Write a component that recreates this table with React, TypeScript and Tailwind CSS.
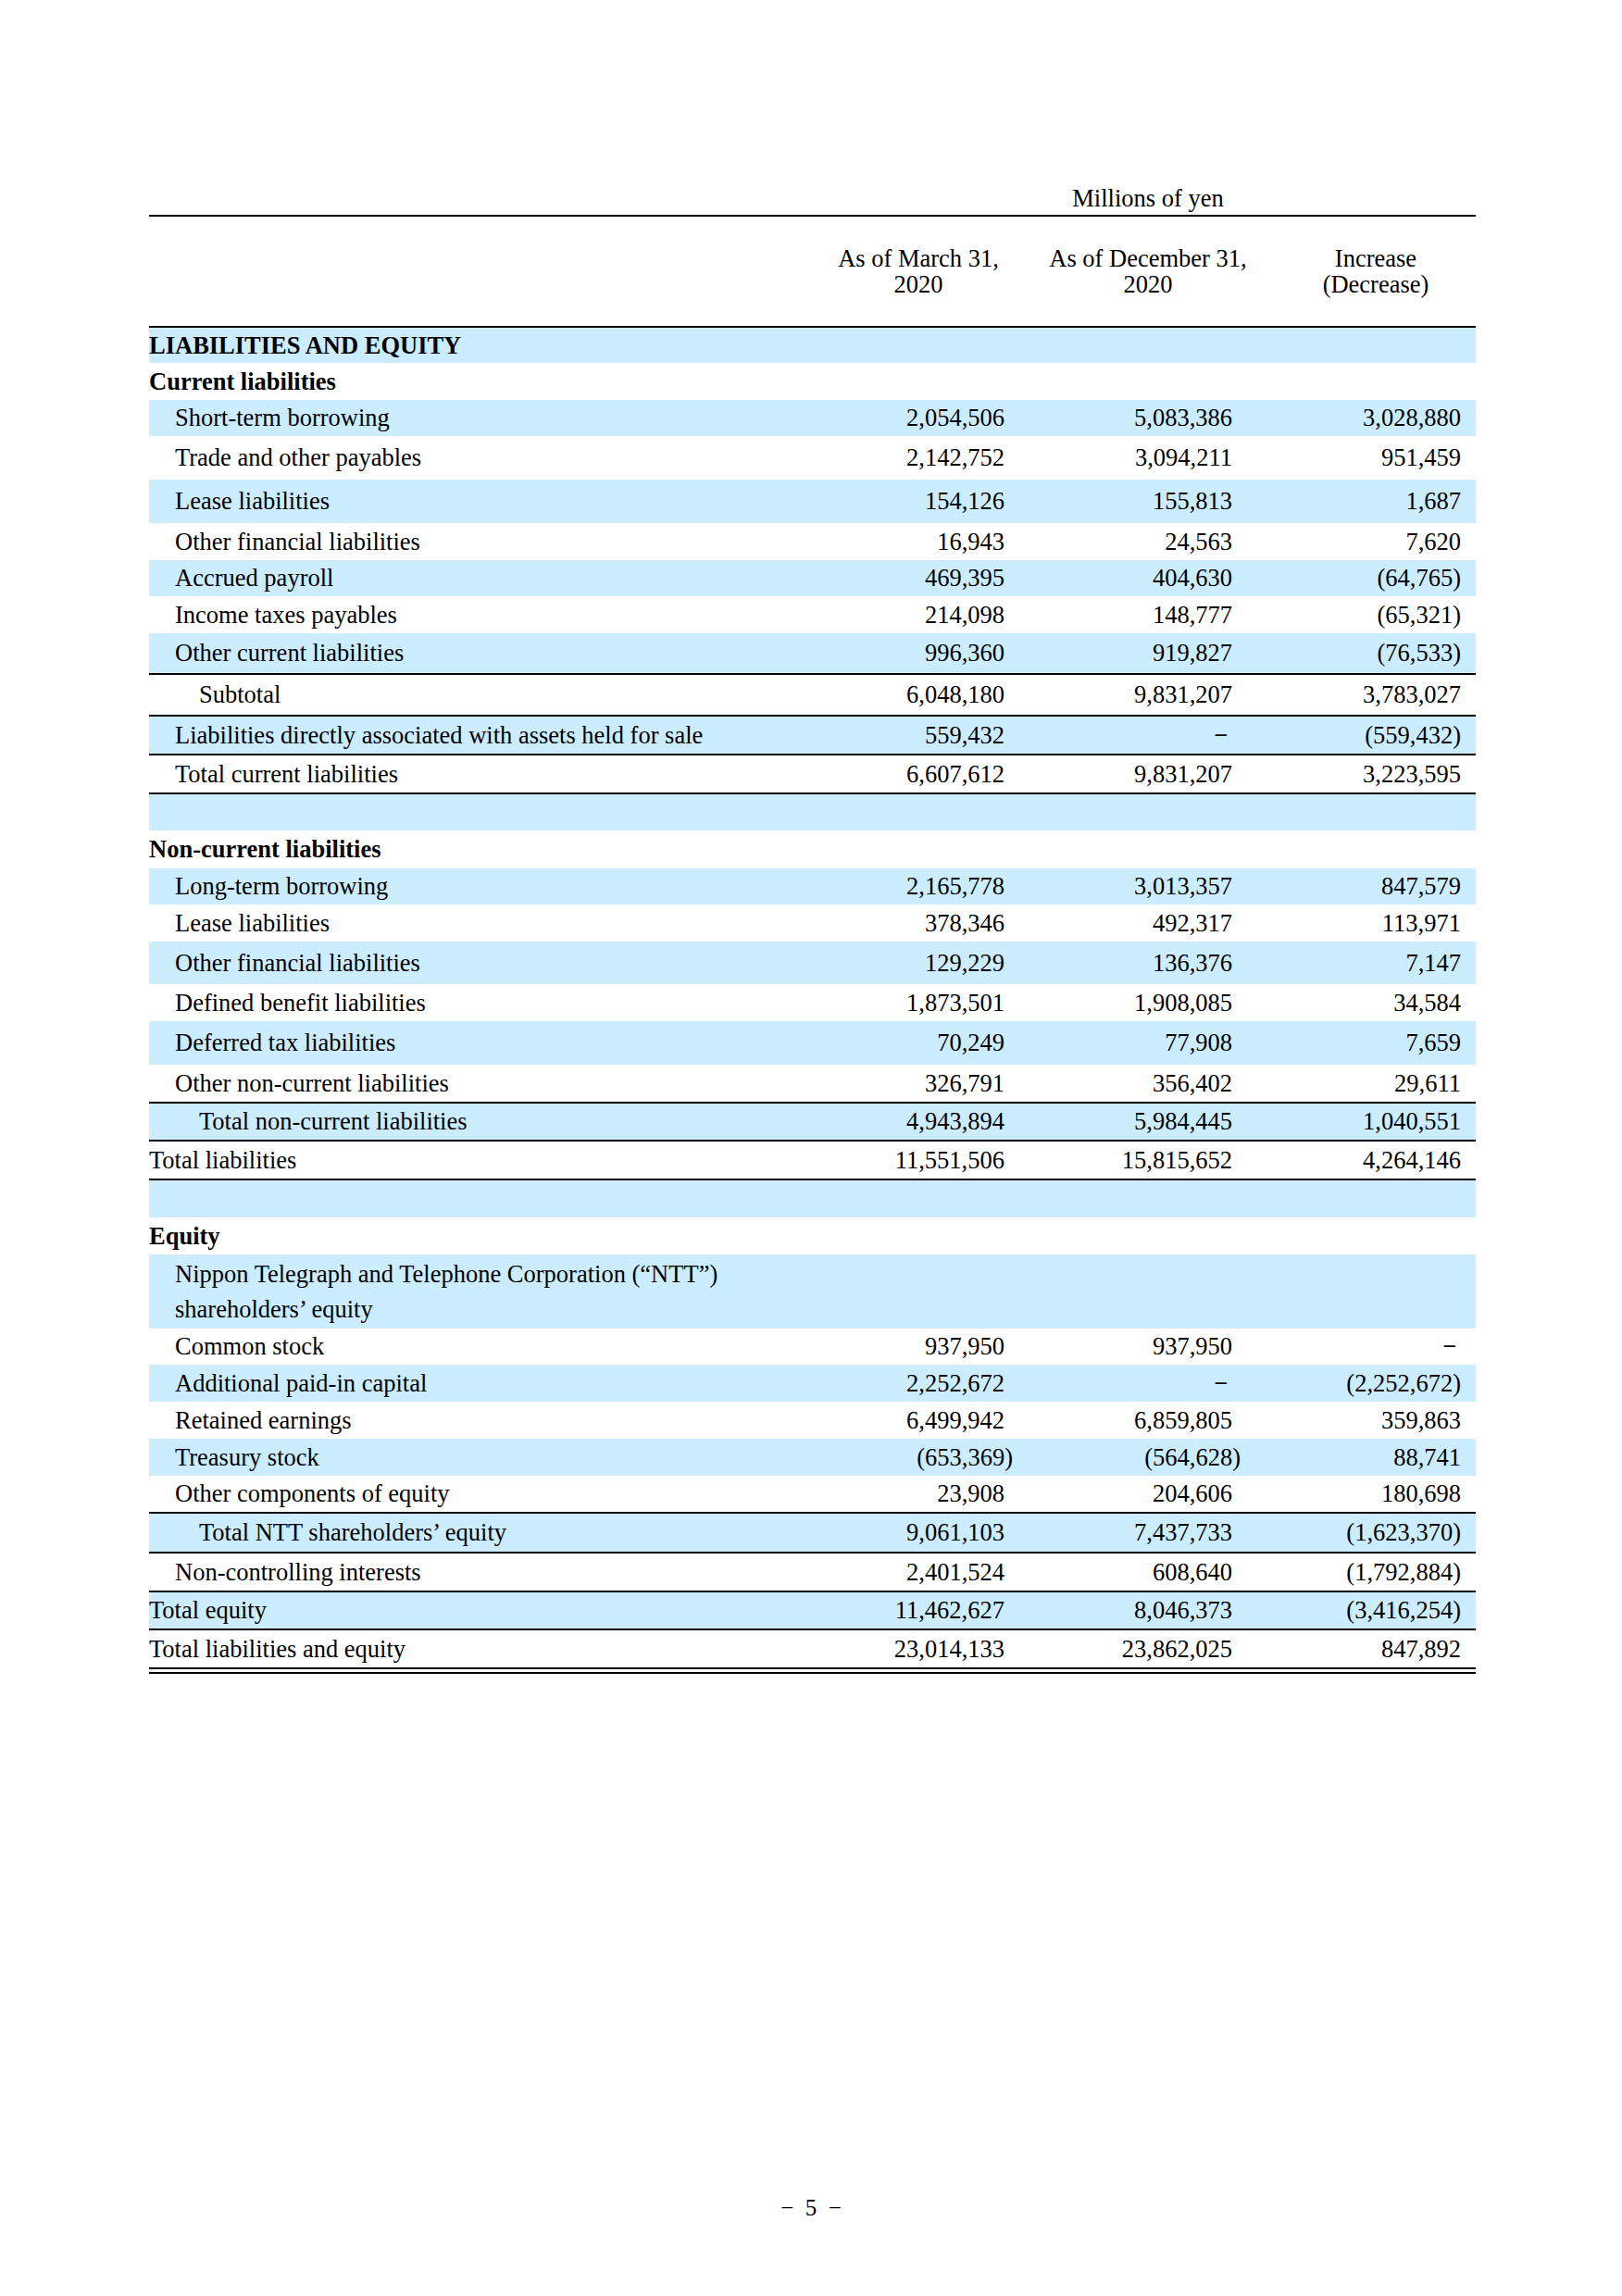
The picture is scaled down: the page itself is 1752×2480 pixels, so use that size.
import React from "react";

type Row = {
  label: React.ReactNode;
  v?: [React.ReactNode, React.ReactNode, React.ReactNode];
  h: string;
  bg?: boolean;
  bold?: boolean;
  indent?: 0 | 1 | 2;
  lineAfter?: boolean;
};

const Dash = () => <span className="pr-[5px] font-bold">−</span>;
const Hang = ({ children }: { children: React.ReactNode }) => (
  <span className="-mr-[9px]">{children}</span>
);

const rows: Row[] = [
  { label: "LIABILITIES AND EQUITY", h: "h-[38px]", bg: true, bold: true, indent: 0 },
  { label: "Current liabilities", h: "h-[40px]", bold: true, indent: 0 },
  { label: "Short-term borrowing", v: ["2,054,506", "5,083,386", "3,028,880"], h: "h-[39px]", bg: true, indent: 1 },
  { label: "Trade and other payables", v: ["2,142,752", "3,094,211", "951,459"], h: "h-[47px]", indent: 1 },
  { label: "Lease liabilities", v: ["154,126", "155,813", "1,687"], h: "h-[47px]", bg: true, indent: 1 },
  { label: "Other financial liabilities", v: ["16,943", "24,563", "7,620"], h: "h-[40px]", indent: 1 },
  { label: "Accrued payroll", v: ["469,395", "404,630", "(64,765)"], h: "h-[39px]", bg: true, indent: 1 },
  { label: "Income taxes payables", v: ["214,098", "148,777", "(65,321)"], h: "h-[40px]", indent: 1 },
  { label: "Other current liabilities", v: ["996,360", "919,827", "(76,533)"], h: "h-[43px]", bg: true, indent: 1, lineAfter: true },
  { label: "Subtotal", v: ["6,048,180", "9,831,207", "3,783,027"], h: "h-[43px]", indent: 2, lineAfter: true },
  { label: "Liabilities directly associated with assets held for sale", v: ["559,432", <Dash key="d" />, "(559,432)"], h: "h-[40px]", bg: true, indent: 1, lineAfter: true },
  { label: "Total current liabilities", v: ["6,607,612", "9,831,207", "3,223,595"], h: "h-[40px]", indent: 1, lineAfter: true },
  { label: "", h: "h-[39px]", bg: true },
  { label: "Non-current liabilities", h: "h-[41px]", bold: true, indent: 0 },
  { label: "Long-term borrowing", v: ["2,165,778", "3,013,357", "847,579"], h: "h-[39px]", bg: true, indent: 1 },
  { label: "Lease liabilities", v: ["378,346", "492,317", "113,971"], h: "h-[40px]", indent: 1 },
  { label: "Other financial liabilities", v: ["129,229", "136,376", "7,147"], h: "h-[46px]", bg: true, indent: 1 },
  { label: "Defined benefit liabilities", v: ["1,873,501", "1,908,085", "34,584"], h: "h-[40px]", indent: 1 },
  { label: "Deferred tax liabilities", v: ["70,249", "77,908", "7,659"], h: "h-[47px]", bg: true, indent: 1 },
  { label: "Other non-current liabilities", v: ["326,791", "356,402", "29,611"], h: "h-[40px]", indent: 1, lineAfter: true },
  { label: "Total non-current liabilities", v: ["4,943,894", "5,984,445", "1,040,551"], h: "h-[39px]", bg: true, indent: 2, lineAfter: true },
  { label: "Total liabilities", v: ["11,551,506", "15,815,652", "4,264,146"], h: "h-[40px]", indent: 0, lineAfter: true },
  { label: "", h: "h-[40px]", bg: true },
  { label: "Equity", h: "h-[40px]", bold: true, indent: 0 },
  {
    label: (
      <span className="leading-[38px]">
        Nippon Telegraph and Telephone Corporation (“NTT”)
        <br />
        shareholders’ equity
      </span>
    ),
    h: "h-[80px]",
    bg: true,
    indent: 1,
  },
  { label: "Common stock", v: ["937,950", "937,950", <Dash key="d" />], h: "h-[39px]", indent: 1 },
  { label: "Additional paid-in capital", v: ["2,252,672", <Dash key="d" />, "(2,252,672)"], h: "h-[40px]", bg: true, indent: 1 },
  { label: "Retained earnings", v: ["6,499,942", "6,859,805", "359,863"], h: "h-[40px]", indent: 1 },
  { label: "Treasury stock", v: [<Hang key="a">(653,369)</Hang>, <Hang key="b">(564,628)</Hang>, "88,741"], h: "h-[40px]", bg: true, indent: 1 },
  { label: "Other components of equity", v: ["23,908", "204,606", "180,698"], h: "h-[39px]", indent: 1, lineAfter: true },
  { label: "Total NTT shareholders’ equity", v: ["9,061,103", "7,437,733", "(1,623,370)"], h: "h-[41px]", bg: true, indent: 2, lineAfter: true },
  { label: "Non-controlling interests", v: ["2,401,524", "608,640", "(1,792,884)"], h: "h-[40px]", indent: 1, lineAfter: true },
  { label: "Total equity", v: ["11,462,627", "8,046,373", "(3,416,254)"], h: "h-[39px]", bg: true, indent: 0, lineAfter: true },
  { label: "Total liabilities and equity", v: ["23,014,133", "23,862,025", "847,892"], h: "h-[40px]", indent: 0 },
];

export default function App() {
  return (
    <div
      className="w-[1752px] h-[2480px] bg-white text-black relative"
      style={{ fontFamily: '"Liberation Serif", "Times New Roman", serif' }}
    >
      <div className="pt-[196px] pl-[161px] w-[1594px] text-[26.5px]">
        {/* Millions of yen */}
        <div className="grid grid-cols-[719px_224px_272px_218px] h-[36px] items-center">
          <div />
          <div />
          <div className="text-center leading-none">Millions of yen</div>
          <div />
        </div>
        <div className="h-[2px] bg-black" />
        {/* Header */}
        <div className="grid grid-cols-[719px_224px_272px_220px] h-[118px] items-center leading-[28px] text-center">
          <div />
          <div>
            As of March 31,
            <br />
            2020
          </div>
          <div>
            As of December 31,
            <br />
            2020
          </div>
          <div>
            Increase
            <br />
            (Decrease)
          </div>
        </div>
        <div className="h-[2px] bg-black" />
        {rows.map((r, i) => (
          <React.Fragment key={i}>
            <div
              className={`grid grid-cols-[719px_215px_246px_253px] items-center leading-none ${r.h} ${
                r.bg ? "bg-[#ccecff]" : ""
              } ${r.bold ? "font-bold" : ""}`}
            >
              <div
                className={
                  r.indent === 2 ? "pl-[54px]" : r.indent === 1 ? "pl-[28px]" : "pl-0"
                }
              >
                {r.label}
              </div>
              <div className="text-right pr-[10px]">{r.v ? r.v[0] : null}</div>
              <div className="text-right pr-[10px]">{r.v ? r.v[1] : null}</div>
              <div className="text-right pr-[16px]">{r.v ? r.v[2] : null}</div>
            </div>
            {r.lineAfter && <div className="h-[2px] bg-black" />}
          </React.Fragment>
        ))}
        <div className="h-[2px] bg-black" />
        <div className="h-[3px]" />
        <div className="h-[2px] bg-black" />
      </div>
      <div className="absolute left-0 right-0 top-[2372px] flex justify-center">
        <span className="text-[25px] leading-none w-[110px] text-center">
          −&nbsp;&nbsp;5&nbsp;&nbsp;−
        </span>
      </div>
    </div>
  );
}
